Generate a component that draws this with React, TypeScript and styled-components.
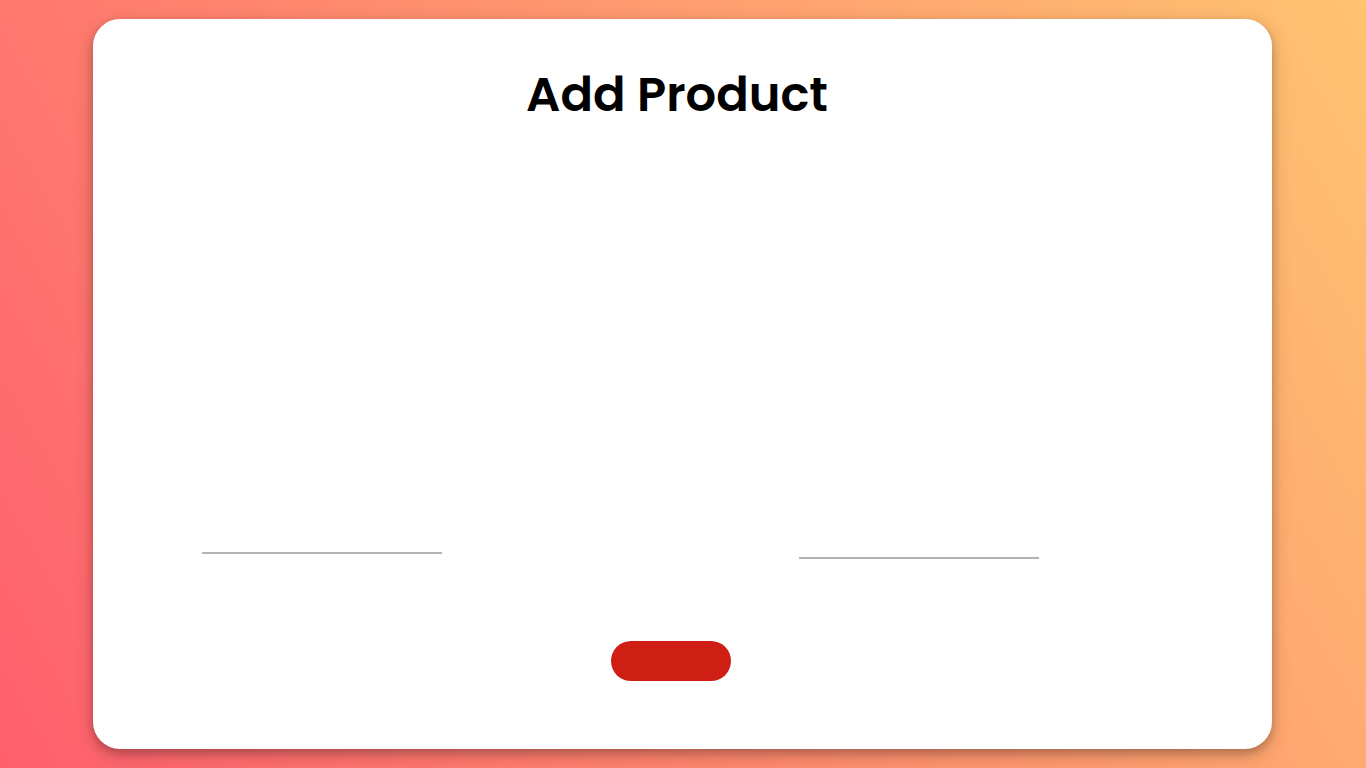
import React from "react";
import styled, { createGlobalStyle } from "styled-components";

const GlobalStyle = createGlobalStyle`
  *, *::before, *::after { box-sizing: border-box; }
  body { margin: 0; font-family: Poppins, Inter, sans-serif; color: #000; }
`;

const Page = styled.main`
  display: flex;
  min-height: 100vh;
  padding: 19px 94px 19px 93px;
  background: linear-gradient(60deg, #ff5f6d, #ffc371);
`;

const Card = styled.form`
  display: flex;
  flex: 1;
  flex-direction: column;
  padding: 40px 0 68px;
  border-radius: 27px;
  background: #fff;
  box-shadow: 0 4px 8px rgba(0, 0, 0, 0.2), 0 6px 20px rgba(0, 0, 0, 0.19);
`;

const Title = styled.h1`
  margin: 0;
  padding-right: 11px;
  font-size: 48px;
  font-weight: 600;
  line-height: 72px;
  text-align: center;
`;

const Fields = styled.div`
  display: flex;
  justify-content: space-between;
  align-items: flex-start;
  margin-top: auto;
  padding: 0 233px 0 109px;
`;

const Field = styled.input<{ $tall?: boolean }>`
  width: 240px;
  height: ${({ $tall }) => ($tall ? 45 : 40)}px;
  padding: 0;
  border: 0;
  border-bottom: 2px solid #b3b3b3;
  outline: 0;
  background: transparent;
  font: inherit;
`;

const Actions = styled.div`
  display: flex;
  justify-content: center;
  margin-top: 82px;
  padding-right: 23px;
`;

const SubmitButton = styled.button`
  width: 120px;
  height: 40px;
  border: 0;
  border-radius: 20px;
  background: #cf1f15;
  cursor: pointer;
`;

export default function App() {
  return (
    <>
      <GlobalStyle />
      <Page>
        <Card onSubmit={(event: React.FormEvent) => event.preventDefault()}>
          <Title>Add Product</Title>
          <Fields>
            <Field type="text" aria-label="Product name" />
            <Field type="text" aria-label="Product price" $tall />
          </Fields>
          <Actions>
            <SubmitButton type="submit" aria-label="Add product" />
          </Actions>
        </Card>
      </Page>
    </>
  );
}
